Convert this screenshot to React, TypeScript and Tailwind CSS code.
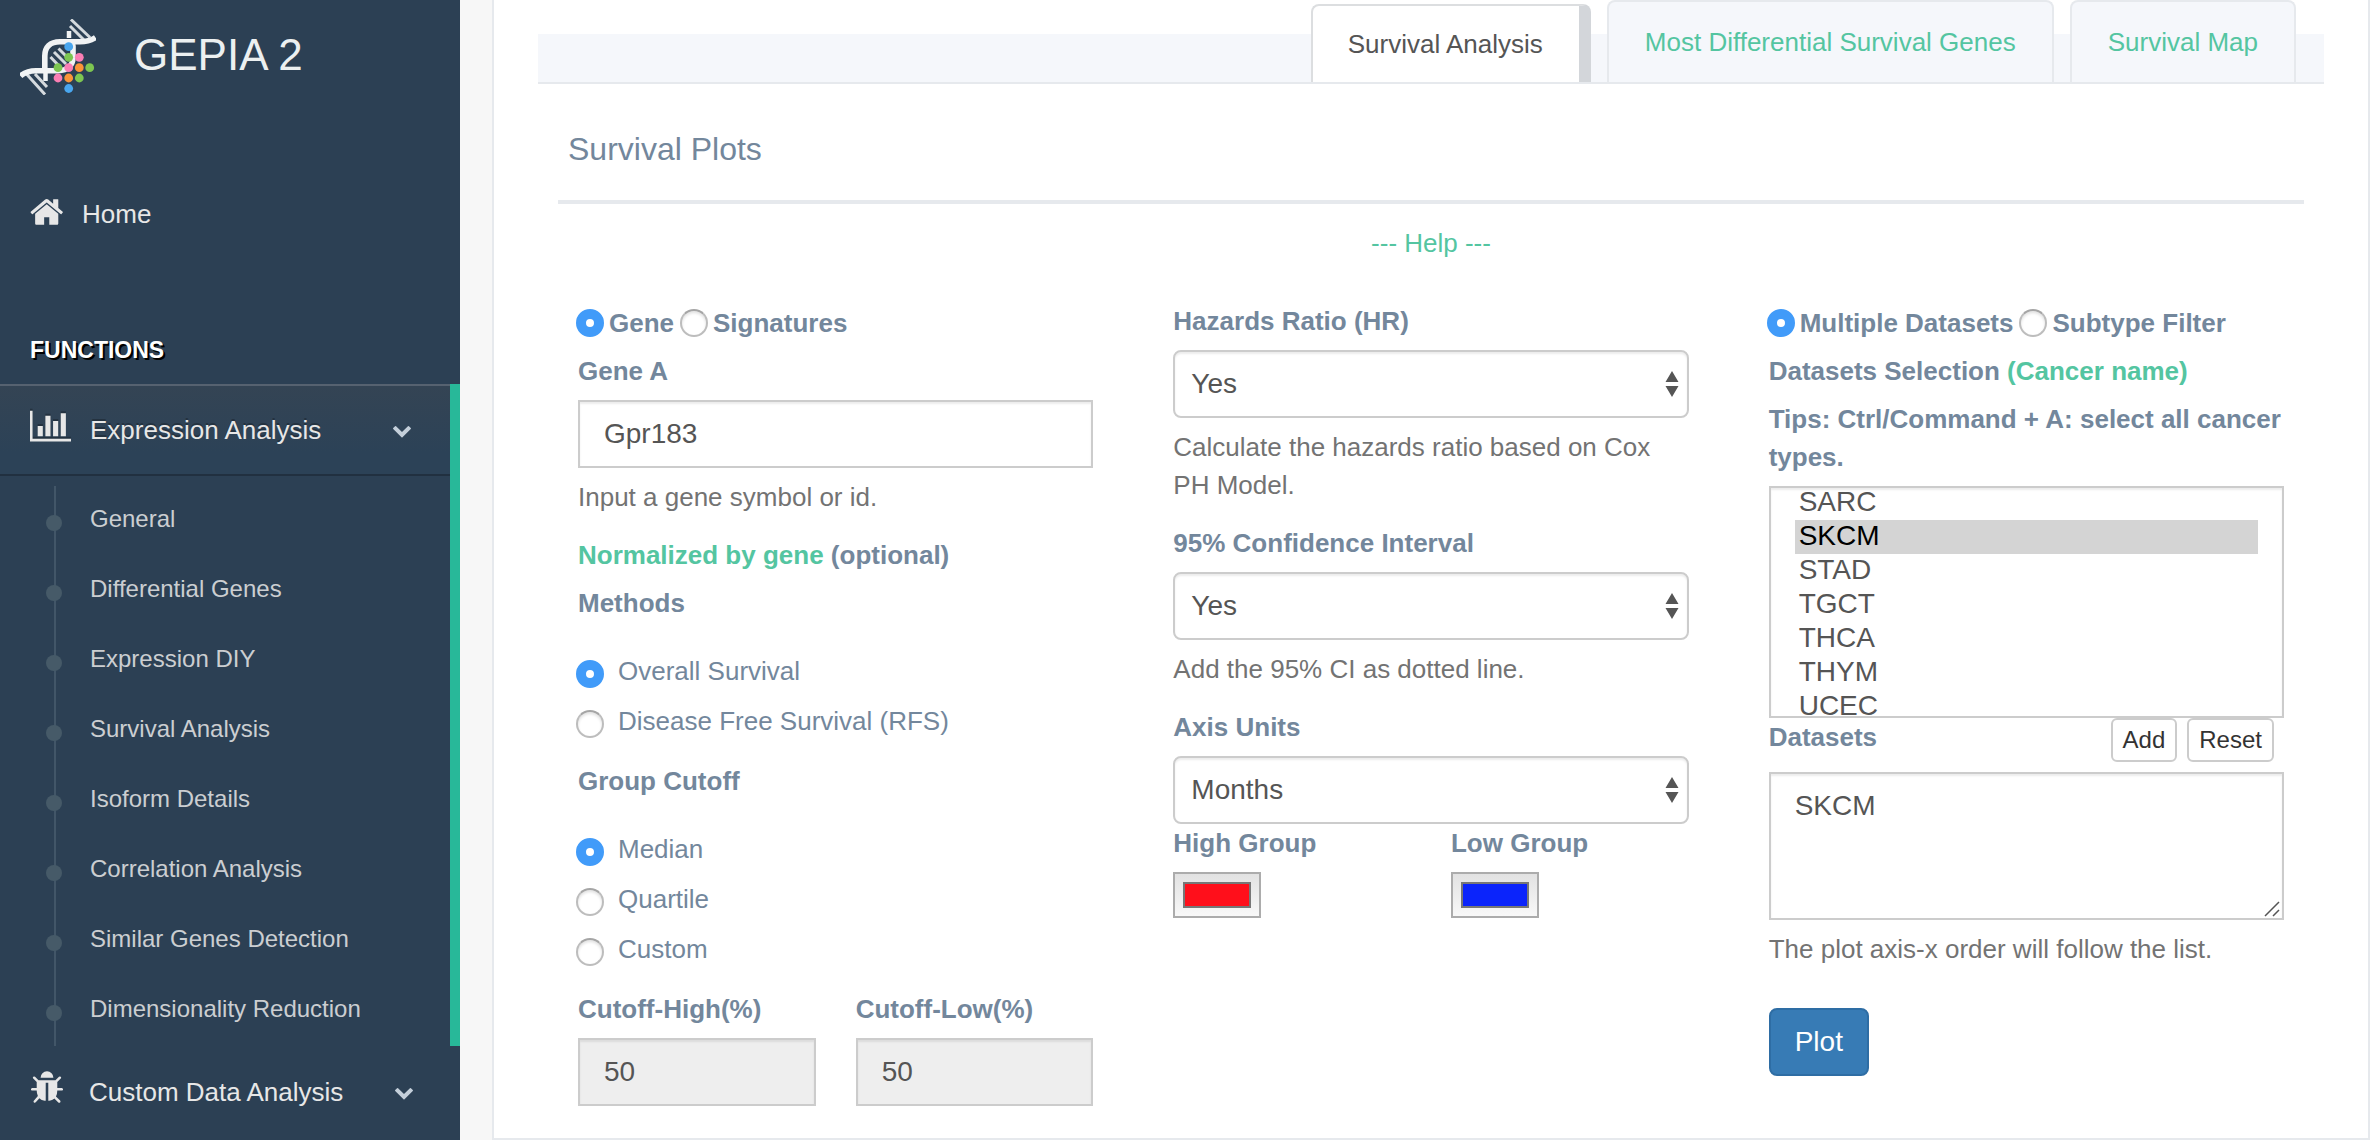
import { useEffect, useRef, type ReactNode } from "react";

const CANCERS = [
  "ACC", "BLCA", "BRCA", "CESC", "CHOL", "COAD", "DLBC", "ESCA", "GBM", "HNSC", "KICH",
  "KIRC", "KIRP", "LAML", "LGG", "LIHC", "LUAD", "LUSC", "MESO", "OV", "PAAD", "PCPG",
  "PRAD", "READ", "SARC", "SKCM", "STAD", "TGCT", "THCA", "THYM", "UCEC", "UCS", "UVM",
];

const SUBMENU = [
  "General",
  "Differential Genes",
  "Expression DIY",
  "Survival Analysis",
  "Isoform Details",
  "Correlation Analysis",
  "Similar Genes Detection",
  "Dimensionality Reduction",
];

const FIELD = "border-2 border-[#ccc] text-[28px] text-[#555] shadow-[inset_0_2px_2px_rgba(0,0,0,0.075)] outline-none";

function Logo() {
  return (
    <svg viewBox="0 0 76 76" className="size-[76px] shrink-0" fill="none" aria-hidden="true">
      <g stroke="#d5dade" strokeWidth="3">
        <path d="M51 0.5 70 18.5M50 7 64 21" />
        <path d="M38.5 29.5 49 40M34 33 46 45M30.5 38 40 48" />
        <path d="M6.5 55 25 75.5M15 55 27 68" />
      </g>
      <g stroke="#f1f3f4">
        <path d="M49 12v7" strokeWidth="4.5" />
        <path d="M25.5 54v8" strokeWidth="4.5" />
        <path d="M0.5 57C5 53 9 51.700 16 51.700H38C48 51.700 53 46 53 38V27C53 24 52 23 51 22" strokeWidth="5.6" />
        <path d="M24.800 52V37C24.800 28 30 22.700 40 22.700H60C67 22.700 71 21.500 75.500 18.500" strokeWidth="5.6" />
      </g>
      <g fill="#49a6ee"><circle cx="48.700" cy="27.700" r="4.400" /><circle cx="48.700" cy="69.500" r="4.400" /></g>
      <g fill="#7dc651">
        <circle cx="48.700" cy="38.300" r="4.400" /><circle cx="38" cy="48.700" r="4.400" />
        <circle cx="69.700" cy="48.700" r="4.400" /><circle cx="59.300" cy="59" r="4.400" />
      </g>
      <g fill="#fb7eb4">
        <circle cx="59.300" cy="38.300" r="4.400" /><circle cx="48.700" cy="48.700" r="4.400" /><circle cx="38" cy="59" r="4.400" />
      </g>
      <g fill="#fb9438"><circle cx="59.300" cy="48.700" r="4.400" /><circle cx="48.700" cy="59" r="4.400" /></g>
    </svg>
  );
}

function HomeIcon() {
  return (
    <svg viewBox="0 0 1792 1792" className="size-9" fill="currentColor" aria-hidden="true">
      <path d="M1408 992v480q0 26-19 45t-45 19h-384v-384h-256v384h-384q-26 0-45-19t-19-45v-480q0-1 .5-3t.5-3l575-474 575 474q1 2 1 6zm223-69l-62 74q-8 9-21 11h-3q-13 0-21-7l-692-577-692 577q-12 8-24 7-13-2-21-11l-62-74q-8-10-7-23.500t11-21.500l719-599q32-26 76-26t76 26l244 204v-195q0-14 9-23t23-9h192q14 0 23 9t9 23v408l219 182q10 8 11 21.500t-7 23.500z" />
    </svg>
  );
}

function BarChartIcon() {
  return (
    <svg viewBox="0 0 2048 1792" className="h-9 w-[41px] drop-shadow-[0_-2px_0_rgba(0,0,0,0.25)]" fill="currentColor" aria-hidden="true">
      <path d="M640 896v512h-256v-512h256zm384-512v1024h-256v-1024h256zm1024 1152v128h-2048v-1536h128v1408h1920zm-640-896v768h-256v-768h256zm384-384v1152h-256v-1152h256z" />
    </svg>
  );
}

function BugIcon() {
  return (
    <svg viewBox="0 0 1792 1792" className="size-9" fill="currentColor" aria-hidden="true">
      <path d="M1696 960q0 26-19 45t-45 19h-224q0 171-67 290l208 209q19 19 19 45t-19 45q-18 19-45 19t-45-19l-198-197q-5 5-15 13t-42 28.500-65 36.500-82 29-97 13v-896h-128v896q-51 0-101.500-13.500t-87-33-66-39-43.500-32.500l-15-14-183 207q-20 21-48 21-24 0-43-16-19-18-20.500-44.500t15.500-46.500l202-227q-58-114-58-274h-224q-26 0-45-19t-19-45 19-45 45-19h224v-294l-173-173q-19-19-19-45t19-45 45-19 45 19l173 173h844l173-173q19-19 45-19t45 19 19 45-19 45l-173 173v294h224q26 0 45 19t19 45zm-480-576h-640q0-133 93.500-226.500t226.500-93.500 226.500 93.500 93.500 226.500z" />
    </svg>
  );
}

function Chevron() {
  return (
    <svg viewBox="0 0 1792 1792" className="ml-auto size-5 text-[#c4cfda]" fill="currentColor" aria-hidden="true">
      <path d="M1683 808l-742 741q-19 19-45 19t-45-19l-742-741q-19-19-19-45.500t19-45.500l166-165q19-19 45-19t45 19l531 531 531-531q19-19 45-19t45 19l166 165q19 19 19 45.500t-19 45.500z" />
    </svg>
  );
}

function Sidebar() {
  return (
    <nav className="w-[460px] shrink-0 bg-[#2c4054] text-[#e7e7e7]">
      <a href="#top" className="flex h-[114px] items-center gap-[38px] pl-5 text-[44px] text-[#ecf0f1]">
        <Logo />
        <span className="mb-1">GEPIA 2</span>
      </a>
      <a href="#home" className="mt-[54px] flex h-[92px] items-center pl-[30px] text-[26px]">
        <span className="mb-1 w-[52px]"><HomeIcon /></span>
        Home
      </a>
      <h3 className="mt-[71px] flex h-[53px] items-start pl-[30px] text-[23px] font-bold text-white [text-shadow:2px_2px_#000]">FUNCTIONS</h3>
      <div className="border-r-[10px] border-[#28b899]">
        <button className="flex h-[92px] w-full items-center border-t-2 border-b-2 border-t-[#566270] border-b-[#213040] bg-linear-to-b from-[#344454] to-[#2c4257] to-75% pr-[38px] pl-[30px] text-[26px] [text-shadow:0_-2px_0_rgba(0,0,0,0.25)]">
          <span className="mb-2 w-[60px]"><BarChartIcon /></span>
          Expression Analysis
          <Chevron />
        </button>
        <ul className="relative mt-[10px] before:absolute before:inset-y-0 before:left-[54px] before:w-[2px] before:bg-[#425668]">
          {SUBMENU.map((item) => (
            <li key={item} className="relative flex h-[70px] items-center gap-7 pl-[46px] text-2xl text-[#cbced1]">
              <span className="mt-1 size-4 rounded-full bg-[#465a68]" />
              <a href="#menu" className="mb-1">{item}</a>
            </li>
          ))}
        </ul>
      </div>
      <button className="flex h-[92px] w-full items-center pr-[46px] pl-[29px] text-[26px]">
        <span className="mb-2 w-[60px]"><BugIcon /></span>
        Custom Data Analysis
        <Chevron />
      </button>
    </nav>
  );
}

function Label({ htmlFor, children }: { htmlFor?: string; children: ReactNode }) {
  return <label htmlFor={htmlFor} className="mb-[10px] block font-bold">{children}</label>;
}

function Radio({ name, checked = false }: { name: string; checked?: boolean }) {
  return (
    <input
      type="radio"
      name={name}
      defaultChecked={checked}
      className="size-7 shrink-0 appearance-none rounded-full border-2 border-[#bdbdbd] border-t-[#a5a5a5] bg-white shadow-[inset_0_2px_3px_rgba(0,0,0,0.12)] checked:border-[10px] checked:border-[#419bf9] checked:shadow-none"
    />
  );
}

function InlineRadios({ name, options }: { name: string; options: string[] }) {
  return (
    <div className="mb-[10px] -ml-[2px] flex gap-[6px] pt-[2px] font-bold">
      {options.map((option, i) => (
        <label key={option} className="flex items-center gap-[5px]">
          <Radio name={name} checked={i === 0} />
          {option}
        </label>
      ))}
    </div>
  );
}

function StackedRadios({ name, options }: { name: string; options: string[] }) {
  return (
    <div className="mt-[30px] mb-[22px] -ml-[2px] flex flex-col gap-3">
      {options.map((option, i) => (
        <label key={option} className="flex items-start gap-[14px]">
          <span className="flex pt-2"><Radio name={name} checked={i === 0} /></span>
          {option}
        </label>
      ))}
    </div>
  );
}

function Select({ id, value, options }: { id: string; value: string; options: string[] }) {
  return (
    <div className="relative">
      <select id={id} defaultValue={value} className={`${FIELD} block h-[68px] w-full appearance-none rounded-lg bg-white px-4`}>
        {options.map((option) => <option key={option}>{option}</option>)}
      </select>
      <svg viewBox="0 0 14 26" className="pointer-events-none absolute top-[21px] right-[10px] h-[26px] w-[14px]" fill="#555" aria-hidden="true">
        <path d="M7 0 13.500 11H.5zM7 26 .5 15h13z" />
      </svg>
    </div>
  );
}

function Hint({ children }: { children: ReactNode }) {
  return <p className="mt-[10px] mb-5 text-[#737373]">{children}</p>;
}

function Percent({ id, label }: { id: string; label: string }) {
  return (
    <div>
      <Label htmlFor={id}>{label}</Label>
      <input id={id} defaultValue="50" disabled className={`${FIELD} block h-[68px] w-full bg-[#eee] px-6`} />
    </div>
  );
}

function Color({ id, label, value }: { id: string; label: string; value: string }) {
  return (
    <div>
      <Label htmlFor={id}>{label}</Label>
      <input
        id={id}
        type="color"
        defaultValue={value}
        className="block h-[46px] w-[88px] appearance-none border-2 border-[#acacac] bg-linear-to-b from-[#e2e2e2] to-[#f8f8f8] p-2 [&::-webkit-color-swatch]:rounded-none [&::-webkit-color-swatch]:border-2 [&::-webkit-color-swatch]:border-[#777] [&::-webkit-color-swatch-wrapper]:p-0"
      />
    </div>
  );
}

function CancerList() {
  const ref = useRef<HTMLSelectElement>(null);
  useEffect(() => {
    // Bring the selected cohort near the top of the list
    if (ref.current) ref.current.scrollTop = CANCERS.indexOf("SARC") * 34 + 2;
  }, []);
  return (
    <select
      id="cancers"
      ref={ref}
      multiple
      defaultValue={["SKCM"]}
      className={`${FIELD} block h-[232px] w-full bg-white px-6 [scrollbar-width:none]`}
    >
      {CANCERS.map((name) => (
        <option key={name} className="h-[34px] px-1 py-0 leading-[34px] checked:bg-[linear-gradient(#d4d4d4,#d4d4d4)] checked:text-black">{name}</option>
      ))}
    </select>
  );
}

const SMALL_BUTTON = "h-11 rounded-md border-2 border-[#ccc] bg-white px-[10px] text-2xl text-[#333]";

export default function App() {
  return (
    <div id="top" className="flex min-h-screen bg-[#f7f7f7] font-['Liberation_Sans',Arial,sans-serif] text-[26px] leading-[38px] text-[#73879c]">
      <Sidebar />
      <main className="min-w-0 flex-1 pl-8">
        <section className="border-2 border-t-0 border-[#e6e9ed] bg-white px-11 pb-8">
          <div className="flex h-[84px] items-end justify-end gap-4 border-b-2 border-[#e6e9ed] bg-[linear-gradient(to_bottom,transparent_34px,#f5f7fb_34px)] pr-7">
            <a href="#survival" className="flex h-[78px] items-center rounded-t-lg border-2 border-r-[12px] border-b-0 border-[#dcdee0] border-r-[#d3d6da] bg-white pr-9 pl-[35px] text-[#555]">Survival Analysis</a>
            <a href="#genes" className="flex h-[82px] items-center rounded-t-lg border-2 border-b-0 border-[#e6e9ed] bg-[#f5f7fb] px-9 text-[#54c5a1]">Most Differential Survival Genes</a>
            <a href="#map" className="flex h-[82px] items-center rounded-t-lg border-2 border-b-0 border-[#e6e9ed] bg-[#f5f7fb] px-9 text-[#54c5a1]">Survival Map</a>
          </div>
          <div className="px-5">
            <h2 className="border-b-4 border-[#e6e9ed] pt-[46px] pb-8 pl-[10px] text-[32px]">Survival Plots</h2>
            <p className="mt-5 text-center"><a href="#help" className="text-[#54c5a1]">--- Help ---</a></p>
            <form className="mt-10 grid grid-cols-3 gap-x-20 px-5" onSubmit={(e) => e.preventDefault()}>
              <div>
                <InlineRadios name="input" options={["Gene", "Signatures"]} />
                <Label htmlFor="gene">Gene A</Label>
                <input id="gene" defaultValue="Gpr183" className={`${FIELD} block h-[68px] w-full bg-white px-6`} />
                <Hint>Input a gene symbol or id.</Hint>
                <Label><a href="#normalize" className="text-[#54c5a1]">Normalized by gene</a> (optional)</Label>
                <Label>Methods</Label>
                <StackedRadios name="method" options={["Overall Survival", "Disease Free Survival (RFS)"]} />
                <Label>Group Cutoff</Label>
                <StackedRadios name="cutoff" options={["Median", "Quartile", "Custom"]} />
                <div className="grid grid-cols-2 gap-10">
                  <Percent id="high" label="Cutoff-High(%)" />
                  <Percent id="low" label="Cutoff-Low(%)" />
                </div>
              </div>
              <div>
                <Label htmlFor="hr">Hazards Ratio (HR)</Label>
                <Select id="hr" value="Yes" options={["Yes", "No"]} />
                <Hint>Calculate the hazards ratio based on Cox PH Model.</Hint>
                <Label htmlFor="ci">95% Confidence Interval</Label>
                <Select id="ci" value="Yes" options={["Yes", "No"]} />
                <Hint>Add the 95% CI as dotted line.</Hint>
                <Label htmlFor="units">Axis Units</Label>
                <Select id="units" value="Months" options={["Months", "Days"]} />
                <div className="grid grid-cols-2 gap-10">
                  <Color id="high-color" label="High Group" value="#ff0f1b" />
                  <Color id="low-color" label="Low Group" value="#0b24fb" />
                </div>
              </div>
              <div>
                <InlineRadios name="datasets-mode" options={["Multiple Datasets", "Subtype Filter"]} />
                <Label htmlFor="cancers">Datasets Selection <a href="#cancers" className="text-[#54c5a1]">(Cancer name)</a></Label>
                <Label htmlFor="cancers">Tips: Ctrl/Command + A: select all cancer types.</Label>
                <CancerList />
                <div className="mb-[10px] flex items-start gap-[10px] pr-[10px]">
                  <label htmlFor="datasets" className="mr-auto font-bold">Datasets</label>
                  <button type="button" className={SMALL_BUTTON}>Add</button>
                  <button type="button" className={SMALL_BUTTON}>Reset</button>
                </div>
                <div className="relative">
                  <textarea id="datasets" defaultValue="SKCM" className={`${FIELD} block h-[148px] w-full resize-none bg-white px-6 py-3 leading-[40px]`} />
                  <svg viewBox="0 0 16 16" className="pointer-events-none absolute right-1 bottom-[3px] size-4" stroke="#555" strokeWidth="1.500" aria-hidden="true">
                    <path d="M1 15 15 1M9 15l6-6" />
                  </svg>
                </div>
                <Hint>The plot axis-x order will follow the list.</Hint>
                <button type="submit" className="mt-5 h-[68px] rounded-lg border-2 border-[#2e6da4] bg-[#377bb5] px-6 text-[28px] text-white">Plot</button>
              </div>
            </form>
          </div>
        </section>
      </main>
    </div>
  );
}
